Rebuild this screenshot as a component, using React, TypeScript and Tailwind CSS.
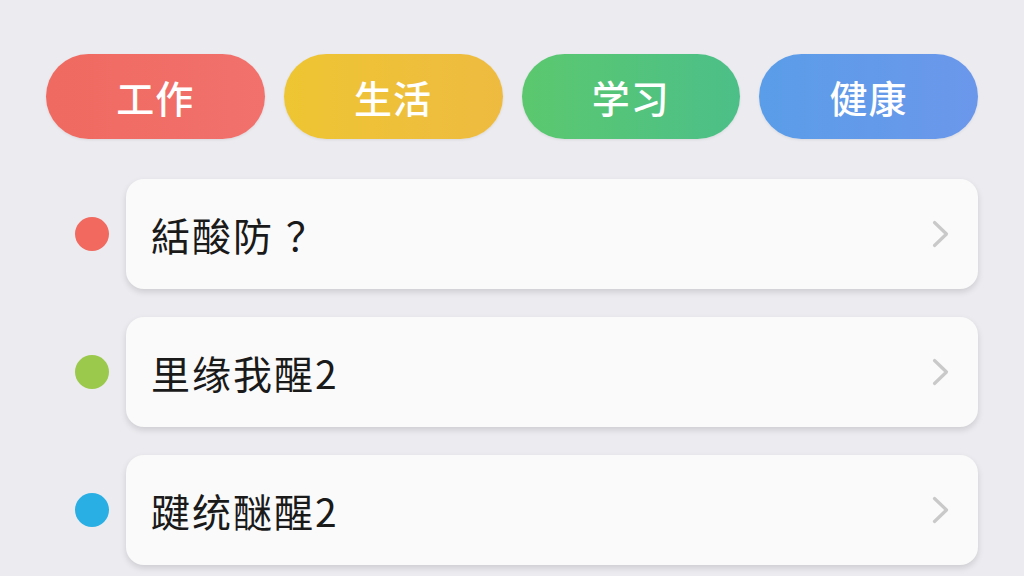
import React from "react";

const pills = [
  { label: "工作", cls: "bg-gradient-to-r from-[#ef6a60] to-[#f2716d]" },
  { label: "生活", cls: "bg-gradient-to-r from-[#eec532] to-[#eebb40]" },
  { label: "学习", cls: "bg-gradient-to-r from-[#5bc86e] to-[#4cbf88]" },
  { label: "健康", cls: "bg-gradient-to-r from-[#5a9de8] to-[#6b97eb]" },
];

const items = [
  { text: "絬酸防", tail: "？", dot: "bg-[#f1695f]" },
  { text: "里缘我醒2", tail: "", dot: "bg-[#9bc94b]" },
  { text: "踺统醚醒2", tail: "", dot: "bg-[#2aafe4]" },
];

function Chevron() {
  return (
    <svg width="19" height="30" viewBox="0 0 19 30" fill="none">
      <path d="M3.5 3.5 L15.5 15 L3.5 26.5" stroke="#c9c9c9" strokeWidth="3.2" strokeLinecap="round" strokeLinejoin="round" />
    </svg>
  );
}

export default function App() {
  return (
    <div
      className="w-[1024px] h-[576px] overflow-hidden bg-[#ebebf0] px-[46px] pt-[54px]"
      style={{ fontFamily: '"Noto Sans CJK SC", "Noto Sans", sans-serif' }}
    >
      <div className="flex gap-[19px]">
        {pills.map((p) => (
          <div
            key={p.label}
            className={`w-[219px] h-[85px] rounded-full flex items-center justify-center text-white text-[38px] font-medium tracking-[1px] shadow-[0_1px_3px_rgba(0,0,0,0.08)] ${p.cls}`}
          >
            {p.label}
          </div>
        ))}
      </div>
      <div className="mt-[40px] flex flex-col gap-[28px]">
        {items.map((it) => (
          <div key={it.text} className="flex items-center">
            <div className={`ml-[29px] w-[34px] h-[34px] rounded-full shrink-0 ${it.dot}`} />
            <div className="ml-[17px] w-[854px] h-[110px] rounded-[18px] bg-[#fafafa] shadow-[0_3px_6px_rgba(0,0,0,0.13)] flex items-center justify-between pl-[25px] pr-[28px]">
              <span className="text-[39px] text-[#1a1a1a] leading-none tracking-[2px]">
                {it.text}
                {it.tail && <span className="ml-[12px]">{it.tail}</span>}
              </span>
              <Chevron />
            </div>
          </div>
        ))}
      </div>
    </div>
  );
}
